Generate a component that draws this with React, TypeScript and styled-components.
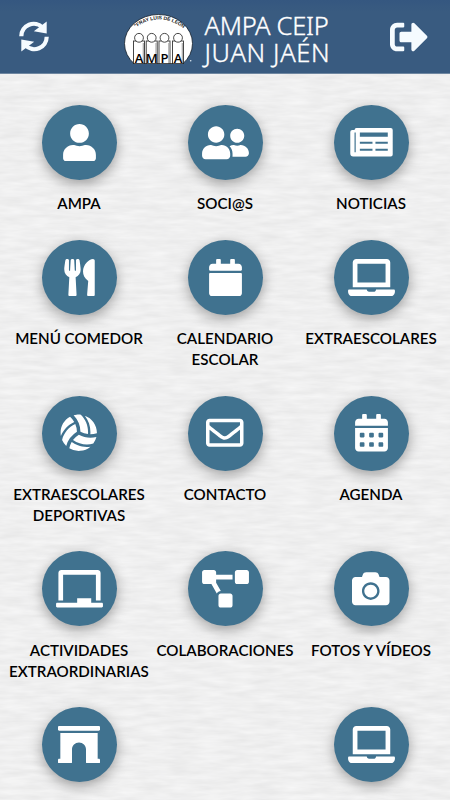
import React from 'react';
import styled, { createGlobalStyle } from 'styled-components';
import {
  FaArchway,
  FaCalendar,
  FaCalendarAlt,
  FaCamera,
  FaChalkboard,
  FaLaptop,
  FaProjectDiagram,
  FaRegEnvelope,
  FaSignOutAlt,
  FaUser,
  FaUserFriends,
  FaUtensils,
  FaVolleyballBall,
} from 'react-icons/fa';

const paper = encodeURIComponent(
  `<svg xmlns="http://www.w3.org/2000/svg" width="450" height="400"><filter id="p" x="0" y="0" width="100%" height="100%" color-interpolation-filters="sRGB"><feTurbulence type="fractalNoise" baseFrequency="0.035 0.2" numOctaves="3" seed="8" stitchTiles="stitch"/><feColorMatrix values="0.07 0 0 0 0.902  0.07 0 0 0 0.902  0.07 0 0 0 0.903  0 0 0 0 1"/></filter><rect width="450" height="400" filter="url(#p)"/></svg>`
);

const GlobalStyle = createGlobalStyle`
  *, *::before, *::after { box-sizing: border-box; }
  body { margin: 0; background: #efefef; }
`;

const Screen = styled.div`
  display: flex;
  flex-direction: column;
  width: 450px;
  height: 800px;
  overflow: hidden;
  font-family: Lato, 'Liberation Sans', sans-serif;
  background: #efefef url("data:image/svg+xml,${paper}");
`;

const Header = styled.header`
  display: flex;
  align-items: center;
  justify-content: space-between;
  flex: none;
  height: 74px;
  padding: 0 22px 0 19px;
  color: #fff;
  background: linear-gradient(#355780, #395b80 12px);
  border-bottom: 1px solid #6f87a1;
`;

const HeaderButton = styled.button<{ $size: number }>`
  display: flex;
  padding: 0;
  border: 0;
  color: #f5fbff;
  background: none;
  font-size: ${({ $size }) => $size}px;
`;

const Brand = styled.div`
  display: flex;
  align-items: center;
  gap: 11px;
  margin-left: 15px;
`;

const BrandName = styled.h1`
  display: flex;
  flex-direction: column;
  width: 126px;
  margin: 4px 0 0;
  font: 300 25.5px/26.6px 'Noto Sans', 'Open Sans', sans-serif;
  -webkit-text-stroke: 0.35px #fff;
  white-space: nowrap;
`;

const BrandLine = styled.span<{ $tracking: number }>`
  letter-spacing: ${({ $tracking }) => $tracking}px;
`;

const Menu = styled.main`
  display: grid;
  grid-template-columns: repeat(3, 146px);
  justify-content: center;
  row-gap: 25.4px;
  padding-top: 31px;
`;

const MenuItem = styled.a<{ $column?: number }>`
  display: flex;
  flex-direction: column;
  align-items: center;
  gap: 13.4px;
  grid-column: ${({ $column }) => $column ?? 'auto'};
  color: #000;
`;

const Disc = styled.span<{ $iconWidth: number }>`
  display: flex;
  align-items: center;
  justify-content: center;
  width: 75px;
  height: 75px;
  border-radius: 50%;
  color: #fff;
  background: #40728f;
  font-size: 37.5px;
  box-shadow: 0 4px 13px rgba(0, 0, 0, 0.34);

  svg {
    flex: none;
    width: ${({ $iconWidth }) => $iconWidth}px;
    height: 1em;
  }
`;

const Label = styled.span`
  font-size: 15.15px;
  font-weight: 600;
  line-height: 21px;
  text-align: center;
  white-space: pre-line;
`;

const RefreshIcon = () => (
  <svg width="30" height="31" viewBox="0 0 30 31" fill="none" stroke="currentColor" strokeWidth="4.2">
    <path d="M2.3 15.2A12.4 12.4 0 0 1 23.6 6.6" />
    <path d="M27.7 15.8A12.4 12.4 0 0 1 6.4 24.4" />
    <path d="M27.7 0.4V12.4L14.8 10.2zM2.3 30.6V18.6L15.2 20.8z" fill="currentColor" stroke="none" />
  </svg>
);

const NewspaperIcon = () => (
  <svg viewBox="0 0 43 38" fill="currentColor">
    <path
      fillRule="evenodd"
      d="M6.3 4H41a2 2 0 0 1 2 2V31a2 2 0 0 1-2 2H3a3 3 0 0 1-3-3V8a2 2 0 0 1 2-2H4.3a2 2 0 0 1 2-2zM9.7 8.5V13H38V8.5zM9.7 18V20H22.5V18zM25.5 18V20H38V18zM9.7 25V27H22.5V25zM25.5 25V27H38V25zM4.3 8.5V28.5H5.5V8.5z"
    />
  </svg>
);

const figures = [
  { x: 15, letter: 'A' },
  { x: 27.7, letter: 'M' },
  { x: 40.5, letter: 'P' },
  { x: 54, letter: 'A' },
];

const LogoArt = styled.svg`
  flex: none;
  margin-top: 4px;
  overflow: visible;
`;

const Logo = () => (
  <LogoArt width="70" height="52" viewBox="0 0 70 52" aria-label="AMPA Fray Luis de León">
    <defs>
      <clipPath id="logoBase">
        <rect width="70" height="51" />
      </clipPath>
      <path id="logoArc" d="M11.5 14.8 Q34.5 -2 59 14.8" />
    </defs>
    <g clipPath="url(#logoBase)">
      <ellipse cx="34.5" cy="30.5" rx="34" ry="29" fill="#fff" stroke="#17212b" strokeWidth="0.8" />
      {figures.map(({ x }) => (
        <g key={x} fill="none" stroke="#333" strokeWidth="0.9">
          <rect x={x - 5.5} y="28" width="11" height="24" fill="#fff" />
          <path d={`M${x + 4.3} 30v21`} stroke="#aaa" strokeWidth="1.2" />
          <circle cx={x} cy="24.8" r="4.4" fill="#fff" />
        </g>
      ))}
      <path d="M9 50.6h51" stroke="#222" strokeWidth="0.9" />
    </g>
    {figures.map(({ x, letter }) => (
      <text
        key={x}
        x={x}
        y="49.6"
        textAnchor="middle"
        fontFamily="Open Sans, sans-serif"
        fontSize="13"
        fontWeight="600"
      >
        {letter}
      </text>
    ))}
    <text fontFamily="Liberation Sans, sans-serif" fontSize="5" fontWeight="700" fill="#222">
      <textPath href="#logoArc">"FRAY LUIS DE LEÓN"</textPath>
    </text>
    <circle cx="66.7" cy="47.8" r="0.8" fill="#dce8f2" />
  </LogoArt>
);

interface Entry {
  icon: React.ComponentType;
  width: number;
  label?: string;
  column?: number;
}

const entries: Entry[] = [
  { icon: FaUser, width: 33, label: 'AMPA' },
  { icon: FaUserFriends, width: 47, label: 'SOCI@S' },
  { icon: NewspaperIcon, width: 43, label: 'NOTICIAS' },
  { icon: FaUtensils, width: 31, label: 'MENÚ COMEDOR' },
  { icon: FaCalendar, width: 33, label: 'CALENDARIO\nESCOLAR' },
  { icon: FaLaptop, width: 47, label: 'EXTRAESCOLARES' },
  { icon: FaVolleyballBall, width: 37.5, label: 'EXTRAESCOLARES\nDEPORTIVAS' },
  { icon: FaRegEnvelope, width: 37.5, label: 'CONTACTO' },
  { icon: FaCalendarAlt, width: 33, label: 'AGENDA' },
  { icon: FaChalkboard, width: 47, label: 'ACTIVIDADES\nEXTRAORDINARIAS' },
  { icon: FaProjectDiagram, width: 47, label: 'COLABORACIONES' },
  { icon: FaCamera, width: 37.5, label: 'FOTOS Y VÍDEOS' },
  { icon: FaArchway, width: 42 },
  { icon: FaLaptop, width: 47, column: 3 },
];

export default function App() {
  return (
    <Screen>
      <GlobalStyle />
      <Header>
        <HeaderButton $size={30} aria-label="Actualizar">
          <RefreshIcon />
        </HeaderButton>
        <Brand>
          <Logo />
          <BrandName>
            <BrandLine $tracking={-0.3}>AMPA CEIP</BrandLine>
            <BrandLine $tracking={0.65}>JUAN JAÉN</BrandLine>
          </BrandName>
        </Brand>
        <HeaderButton $size={38} aria-label="Salir">
          <FaSignOutAlt />
        </HeaderButton>
      </Header>
      <Menu>
        {entries.map(({ icon: Icon, width, label, column }, i) => (
          <MenuItem key={i} $column={column}>
            <Disc $iconWidth={width}>
              <Icon />
            </Disc>
            {label && <Label>{label}</Label>}
          </MenuItem>
        ))}
      </Menu>
    </Screen>
  );
}
